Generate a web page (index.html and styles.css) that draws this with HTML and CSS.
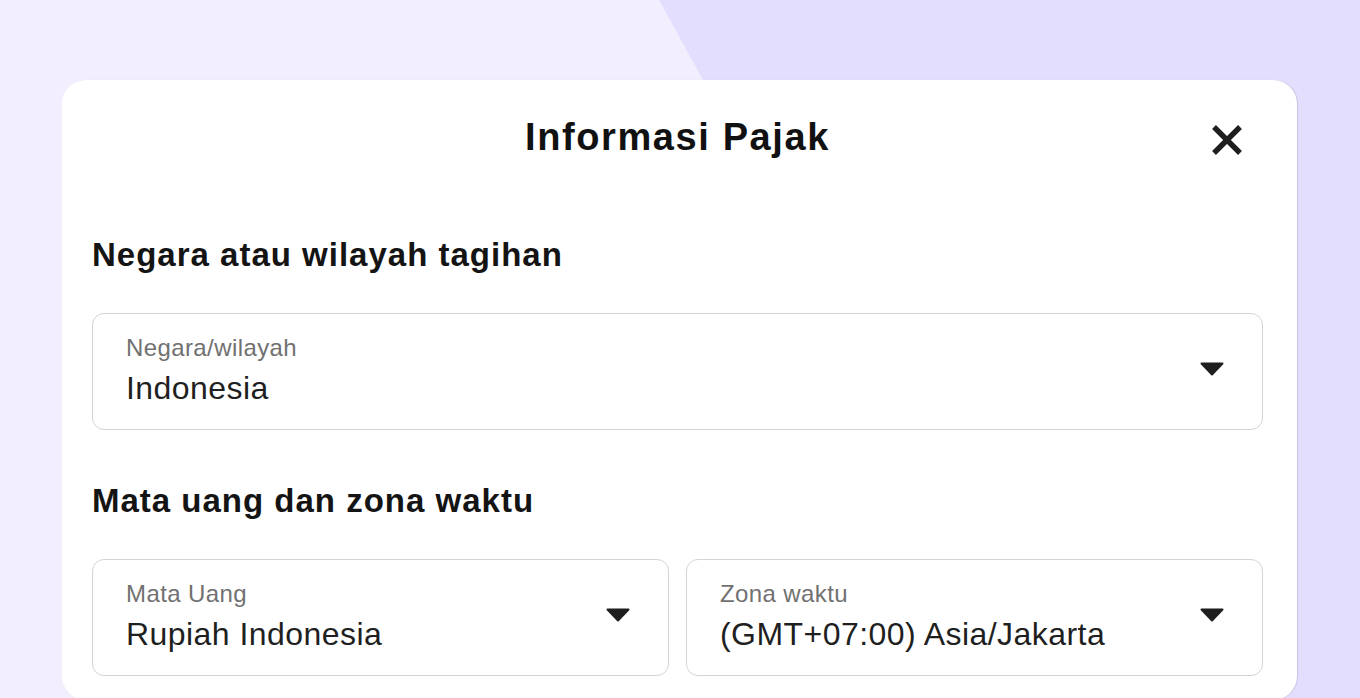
FILE: index.html
```html
<!DOCTYPE html>
<html lang="id">
<head>
<meta charset="utf-8">
<title>Informasi Pajak</title>
<link rel="stylesheet" href="styles.css">
</head>
<body>
<div class="bg-shape"></div>
<div class="modal">
  <div class="modal-header">
    <h1 class="modal-title">Informasi Pajak</h1>
    <button class="close-btn" aria-label="Tutup">
      <svg width="32" height="32" viewBox="0 0 32 32"><path d="M3 3 L29 29 M29 3 L3 29" stroke="#1f1f1f" stroke-width="5.4" stroke-linecap="butt" fill="none"/></svg>
    </button>
  </div>

  <h2 class="section-title first">Negara atau wilayah tagihan</h2>
  <div class="field">
    <div class="field-text">
      <div class="field-label">Negara/wilayah</div>
      <div class="field-value">Indonesia</div>
    </div>
    <svg class="caret" width="24" height="14" viewBox="0 0 24 14"><path d="M1.5 1.5 H22.5 L12 12.5 Z" fill="#1f1f1f" stroke="#1f1f1f" stroke-width="2" stroke-linejoin="round"/></svg>
  </div>

  <h2 class="section-title">Mata uang dan zona waktu</h2>
  <div class="field-row">
    <div class="field">
      <div class="field-text">
        <div class="field-label">Mata Uang</div>
        <div class="field-value">Rupiah Indonesia</div>
      </div>
      <svg class="caret" width="24" height="14" viewBox="0 0 24 14"><path d="M1.5 1.5 H22.5 L12 12.5 Z" fill="#1f1f1f" stroke="#1f1f1f" stroke-width="2" stroke-linejoin="round"/></svg>
    </div>
    <div class="field">
      <div class="field-text">
        <div class="field-label">Zona waktu</div>
        <div class="field-value">(GMT+07:00) Asia/Jakarta</div>
      </div>
      <svg class="caret" width="24" height="14" viewBox="0 0 24 14"><path d="M1.5 1.5 H22.5 L12 12.5 Z" fill="#1f1f1f" stroke="#1f1f1f" stroke-width="2" stroke-linejoin="round"/></svg>
    </div>
  </div>
</div>
</body>
</html>
```
FILE: styles.css
```css
* { box-sizing: border-box; }

html, body {
  margin: 0;
  height: 100%;
  overflow: hidden;
}

body {
  background: #f2eefe;
  font-family: "Liberation Sans", Arial, sans-serif;
  padding: 80px 0 0 62px;
  position: relative;
}

.bg-shape {
  position: absolute;
  inset: 0;
  background: #e3defe;
  clip-path: polygon(659px 0, 100% 0, 100% 100%, 1043px 100%);
  z-index: 0;
}

.modal {
  position: relative;
  z-index: 1;
  width: 1235px;
  background: #ffffff;
  border-radius: 24px;
  padding: 35px 34px 24px 30px;
  box-shadow: 1px 0 1px rgba(0, 0, 0, 0.12);
}

.modal-header {
  display: grid;
  grid-template-columns: 1fr auto 1fr;
  align-items: center;
}

.modal-title {
  grid-column: 2;
  margin: 0;
  font-size: 38px;
  line-height: 44px;
  font-weight: 700;
  letter-spacing: 1.6px;
  color: #111111;
}

.close-btn {
  grid-column: 3;
  justify-self: end;
  margin: 5px 20px 0 0;
  padding: 0;
  border: 0;
  background: none;
  width: 32px;
  height: 32px;
  display: flex;
}

.section-title {
  margin: 51px 0 38px;
  font-size: 33px;
  line-height: 40px;
  font-weight: 700;
  letter-spacing: 1px;
  color: #141414;
}

.section-title.first {
  margin-top: 76px;
}

.field {
  display: flex;
  align-items: center;
  border: 1px solid #d4d4d8;
  border-radius: 12px;
  padding: 20px 38px 23px 33px;
  height: 117px;
}

.field-text {
  flex: 1;
  min-width: 0;
}

.field-label {
  font-size: 24px;
  line-height: 28px;
  color: #717171;
  letter-spacing: 0.4px;
}

.field-value {
  margin-top: 8px;
  font-size: 32px;
  line-height: 36px;
  color: #1f1f1f;
  letter-spacing: 0.45px;
  white-space: nowrap;
}

.caret {
  flex: none;
  margin-top: -2px;
}

.field-row {
  display: grid;
  grid-template-columns: 1fr 1fr;
  gap: 17px;
}
```
